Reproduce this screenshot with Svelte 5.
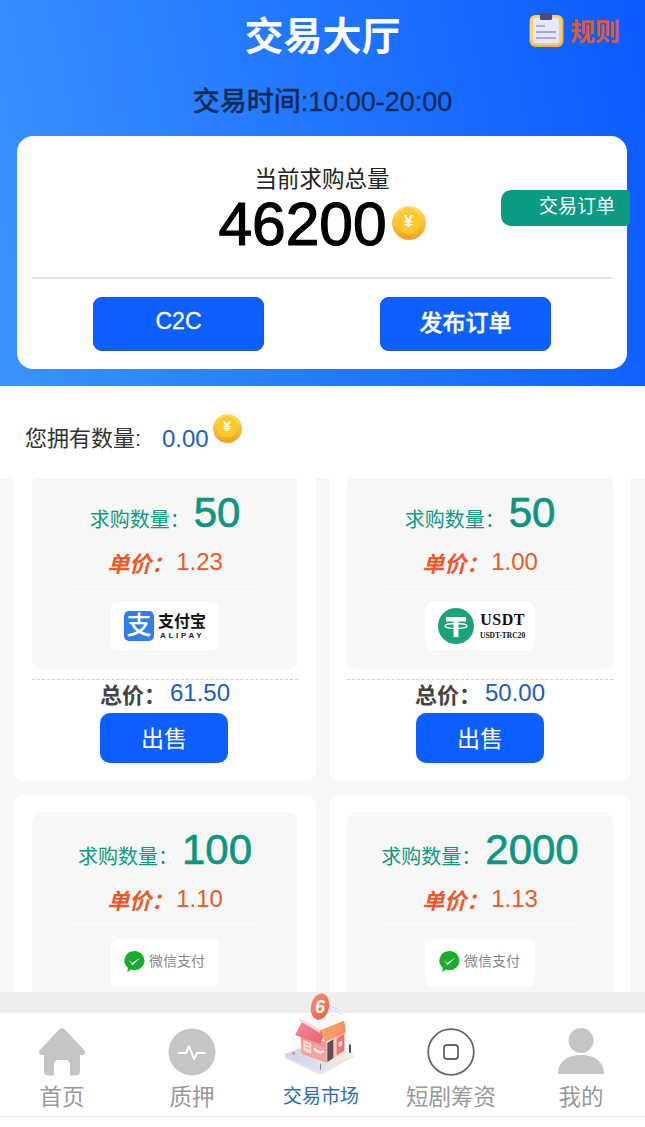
<script>
  const cards = [
    { qty: '50', price: '1.23', total: '61.50', pay: 'alipay' },
    { qty: '50', price: '1.00', total: '50.00', pay: 'usdt' },
    { qty: '100', price: '1.10', total: '110.00', pay: 'wechat' },
    { qty: '2000', price: '1.13', total: '2260.00', pay: 'wechat' }
  ];
</script>

{#snippet coin(cls)}
  <svg class={cls} viewBox="0 0 34 34" aria-hidden="true">
    <defs>
      <linearGradient id="rim" x1="0" y1="0" x2="0" y2="1">
        <stop offset="0" stop-color="#fde06a" />
        <stop offset="1" stop-color="#eea21c" />
      </linearGradient>
    </defs>
    <circle cx="17" cy="17" r="17" fill="url(#rim)" />
    <circle cx="16.500" cy="15" r="12.500" fill="#fbc92c" />
    <text x="16.500" y="20.500" text-anchor="middle" class="yen">¥</text>
  </svg>
{/snippet}

<div class="page">
  <header class="hero">
    <div class="top">
      <span></span>
      <h1>交易大厅</h1>
      <div class="rules">
        <svg class="clip" viewBox="0 0 35 34" aria-hidden="true">
          <rect x="0.500" y="2" width="34" height="32" rx="6" fill="#f2b04d" />
          <rect x="1" y="2" width="32" height="30" rx="6" fill="#f9d06c" />
          <rect x="4" y="5" width="26" height="25" rx="2.500" fill="#e8e7fb" />
          <rect x="11" y="0" width="12" height="7" rx="1.500" fill="#4b4a80" />
          <rect x="7" y="12" width="9" height="2" fill="#aab0e4" />
          <rect x="7" y="18" width="20" height="2" fill="#a3aae2" />
          <rect x="7" y="24" width="20" height="2" fill="#a3aae2" />
        </svg>
        <span>规则</span>
      </div>
    </div>
    <p class="hours">交易时间:10:00-20:00</p>

    <section class="panel">
      <p class="panel-title">当前求购总量</p>
      <div class="sum">
        <span>46200</span>
        {@render coin('coin-lg')}
      </div>
      <div class="tag">交易订单</div>
      <div class="rule"></div>
      <div class="actions">
        <button class="light">C2C</button>
        <button>发布订单</button>
      </div>
    </section>
  </header>

  <div class="balance">
    <span class="bal-label">您拥有数量:</span>
    <span class="bal-value">0.00</span>
    {@render coin('coin-sm')}
  </div>

  <div class="list">
    <div class="grid">
      {#each cards as c}
        <article class="card">
          <div class="inner">
            <div class="qty"><span class="qty-l">求购数量{'\uFF1A'}</span><b>{c.qty}</b></div>
            <div class="price"><em>单价{'\uFF1A'}</em><span>{c.price}</span></div>
            <div class="thin"></div>
            <div class="logo {c.pay}">
              {#if c.pay === 'alipay'}
                <div class="ali-mark">支</div>
                <div class="ali-text"><strong>支付宝</strong><small>ALIPAY</small></div>
              {:else if c.pay === 'usdt'}
                <svg class="tether" viewBox="0 0 36 36" aria-hidden="true">
                  <circle cx="18" cy="18" r="18" fill="#1ba27a" />
                  <path d="M8 9h20v4.500h-7.600v4.200h-4.800v-4.200H8z M15.600 17.700h4.800V29h-4.800z" fill="#fff" />
                  <ellipse cx="18" cy="18" rx="11" ry="2.500" fill="none" stroke="#fff" stroke-width="1.300" />
                </svg>
                <div class="usdt-text"><strong>USDT</strong><small>USDT-TRC20</small></div>
              {:else}
                <svg class="wx" viewBox="0 0 22 23" aria-hidden="true">
                  <path d="M11 0a10.500 10 0 1 1-4 19.300L3.500 22.500 4 17.500A10.500 10 0 0 1 11 0z" fill="#1aad2c" />
                  <path d="M5 9.500l3.500 3 8.500-5.500-8 8z" fill="#fff" />
                </svg>
                <span class="wx-text">微信支付</span>
              {/if}
            </div>
          </div>
          <div class="dash"></div>
          <div class="total"><strong>总价{'\uFF1A'}</strong><span>{c.total}</span></div>
          <button class="sell">出售</button>
        </article>
      {/each}
    </div>
  </div>

  <div class="band"></div>

  <nav class="nav">
    <div class="item">
      <svg class="ico" viewBox="0 0 48 48" aria-hidden="true">
        <path d="M24 0c1 0 2 .5 3 1.500L46 22c2 2.500 1 5-2 5h-2v16c0 3-1.500 4.500-4 4.500h-6V37c0-3-2-5-4-5h-8c-2 0-4 2-4 5v10.500h-6c-2.500 0-4-1.500-4-4.500V27H4c-3 0-4-2.500-2-5L21 1.500C22 .5 23 0 24 0z" fill="#c5c5c5" />
      </svg>
      <span>首页</span>
    </div>
    <div class="item">
      <svg class="ico" viewBox="0 0 48 48" aria-hidden="true">
        <circle cx="24" cy="24" r="23.500" fill="#c5c5c5" />
        <path d="M11 25h7l3-7 5 13 3-6h8" fill="none" stroke="#fff" stroke-width="2" stroke-linejoin="round" stroke-linecap="round" />
      </svg>
      <span>质押</span>
    </div>
    <div class="item active">
      <svg class="shop" viewBox="0 0 330 270" aria-hidden="true">
        <defs>
          <linearGradient id="base" x1="0" y1="0" x2="1" y2="0">
            <stop offset="0" stop-color="#c9d2f1" />
            <stop offset="1" stop-color="#fdeedd" />
          </linearGradient>
          <linearGradient id="wall" x1="0" y1="0" x2="0" y2="1">
            <stop offset="0" stop-color="#f58d8d" />
            <stop offset="1" stop-color="#f3a79a" />
          </linearGradient>
          <linearGradient id="awn" x1="0" y1="0" x2="1" y2="1">
            <stop offset="0" stop-color="#f58a98" />
            <stop offset="1" stop-color="#ea5f6a" />
          </linearGradient>
          <linearGradient id="awn2" x1="0" y1="0" x2="1" y2="0">
            <stop offset="0" stop-color="#f6a468" />
            <stop offset="1" stop-color="#f58f62" />
          </linearGradient>
          <linearGradient id="sign" x1="0" y1="0" x2="1" y2="1">
            <stop offset="0" stop-color="#f49272" />
            <stop offset="1" stop-color="#ec5e43" />
          </linearGradient>
        </defs>
        <path d="M45 212 150 172l105 42-100 54c-3 1-7 1-10 0L48 222c-3-2-4-7-3-10z" fill="#e9e3f2" />
        <path d="M45 207 150 167l105 42-100 50c-3 1-7 1-10 0L48 216c-3-2-4-7-3-9z" fill="url(#base)" />
        <path d="M92 150 170 172v62L95 206z" fill="url(#wall)" />
        <path d="M170 172 226 142v54l-56 38z" fill="#f9c9b6" />
        <path d="M172 174 190 163v56l-18 12z" fill="#5d4f55" />
        <path d="M200 160l22-13v50l-22 14z" fill="#f27470" />
        <path d="M206 172l10-5v14l-10 6z" fill="#fde8e0" />
        <path d="M100 165l24 9v34l-24-10z" fill="#fcd9cf" />
        <path d="M104 176l16 6M104 186l16 6" stroke="#f29a96" stroke-width="2.500" />
        <path d="M130 176l34 11v36l-34-12z" fill="#f7a5a0" />
        <path d="M132 190q14 18 30 8" fill="none" stroke="#fff" stroke-width="6" />
        <path d="M75 150 95 112l75 24-20 40z" fill="url(#awn)" />
        <path d="M150 134 222 104l6 38-62 30z" fill="url(#awn2)" />
        <path d="M88 98 150 74l76 32-76 30z" fill="#fff8f3" />
        <path d="M88 98l62 38v8L89 108z" fill="#efdcd8" />
        <path d="M172 50l46 22v18l-46-22z" fill="#f3f1fb" />
        <path d="M176 60l38 18M176 68l38 18" stroke="#c9c9ee" stroke-width="2" />
        <ellipse cx="150" cy="65" rx="27" ry="40" transform="rotate(12 150 65)" fill="url(#sign)" />
        <text x="150" y="84" text-anchor="middle" class="six">6</text>
        <rect x="237" y="178" width="6" height="26" rx="3" fill="#46505f" />
        <rect x="150" y="236" width="3" height="18" fill="#7d84a5" />
        <circle cx="71" cy="205" r="5" fill="#ec8a86" />
      </svg>
      <span>交易市场</span>
    </div>
    <div class="item">
      <svg class="ico" viewBox="0 0 48 48" aria-hidden="true">
        <circle cx="24" cy="24" r="22.800" fill="none" stroke="#666" stroke-width="1.800" />
        <rect x="17" y="17" width="14" height="14" rx="3" fill="none" stroke="#666" stroke-width="1.800" />
      </svg>
      <span>短剧筹资</span>
    </div>
    <div class="item">
      <svg class="ico" viewBox="0 0 48 48" aria-hidden="true">
        <ellipse cx="24" cy="12.500" rx="12.500" ry="12.500" fill="#c5c5c5" />
        <path d="M1 46c0-13 10-19 23-19s23 6 23 19z" fill="#c5c5c5" />
      </svg>
      <span>我的</span>
    </div>
  </nav>
</div>

<style>
  :global(body) {
    margin: 0;
    background: #fff;
  }
  .page {
    width: 645px;
    height: 1127px;
    overflow: hidden;
    background: #fff;
    font-family: "Liberation Sans", "Noto Sans CJK SC", sans-serif;
  }
  p, h1 {
    margin: 0;
  }
  button {
    border: 0;
    padding: 0;
    font: inherit;
    color: #fff;
    background: #0d5fff;
  }

  .hero {
    background: linear-gradient(78deg, #3a94ff 0%, #2178ff 50%, #0b5aff 100%);
    padding-bottom: 17px;
  }
  .top {
    display: grid;
    grid-template-columns: 1fr auto 1fr;
    align-items: center;
    height: 74px;
  }
  h1 {
    color: #fff;
    font-size: 39px;
    font-weight: 700;
    line-height: 74px;
  }
  .rules {
    justify-self: end;
    display: flex;
    align-items: center;
    gap: 6px;
    margin-right: 25px;
    margin-bottom: 15px;
    color: #df5a33;
    font-size: 25px;
    font-weight: 700;
  }
  .clip {
    width: 35px;
    height: 34px;
  }
  .hours {
    margin-top: 10px;
    line-height: 36px;
    text-align: center;
    font-size: 27px;
    font-weight: 500;
    color: #0f2b58;
    -webkit-text-stroke: 0.3px #0f2b58;
  }
  .panel {
    position: relative;
    margin: 16px 18px 0 17px;
    padding: 26px 15px 18px;
    background: #fff;
    border-radius: 16px;
  }
  .panel-title {
    text-align: center;
    font-size: 22.500px;
    line-height: 36px;
    margin-bottom: -2px;
    color: #222;
  }
  .sum {
    display: flex;
    justify-content: center;
    align-items: center;
    gap: 5px;
    height: 56px;
    color: #000;
    font-size: 60.500px;
    -webkit-text-stroke: 1.200px #000;
  }
  .coin-lg {
    width: 34px;
    height: 34px;
    margin-top: -2px;
  }
  .coin-sm {
    width: 29px;
    height: 29px;
    margin-left: 4px;
  }
  .yen {
    fill: #fff;
    font-size: 17px;
    font-weight: 700;
  }
  .tag {
    position: absolute;
    left: 484px;
    top: 54px;
    width: 129px;
    height: 36px;
    box-sizing: border-box;
    padding-right: 15px;
    line-height: 33px;
    text-align: right;
    font-size: 19px;
    color: #fff;
    background: #0b9a82;
    border-radius: 10px 5px 5px 10px;
  }
  .rule {
    height: 2px;
    margin-top: 25px;
    background: #e3e3e3;
  }
  .actions {
    display: flex;
    justify-content: center;
    gap: 116px;
    margin-top: 18px;
  }
  .actions button {
    width: 171px;
    height: 54px;
    padding-bottom: 6px;
    border-radius: 9px;
    font-size: 23px;
    font-weight: 500;
    -webkit-text-stroke: 0.4px #fff;
    box-shadow: inset 0 0 0 1px #1a5ad6;
  }
  .actions .light {
    font-weight: 400;
    -webkit-text-stroke: 0.3px #fff;
  }

  .balance {
    box-sizing: border-box;
    height: 92px;
    padding: 28px 0 0 25px;
    display: flex;
    align-items: flex-start;
  }
  .bal-label {
    width: 137px;
    font-size: 22px;
    line-height: 50px;
    color: #333;
  }
  .bal-value {
    font-size: 24px;
    line-height: 50px;
    color: #1a5fc8;
  }

  .list {
    height: 514px;
    overflow: hidden;
    background: #f7f7f7;
  }
  .grid {
    display: grid;
    grid-template-columns: 303px 302px;
    gap: 14px 13px;
    margin: -20px 0 0 13px;
  }
  .card {
    display: flex;
    flex-direction: column;
    align-items: center;
    box-sizing: border-box;
    height: 323px;
    padding: 17px 18px 18px 19px;
    background: #fff;
    border-radius: 10px;
  }
  .card:nth-child(even) {
    padding-left: 18px;
  }
  .card:nth-child(odd) .sell {
    margin-left: -2px;
  }
  .inner {
    box-sizing: border-box;
    width: 266px;
    height: 194px;
    flex: none;
    padding-top: 13px;
    display: flex;
    flex-direction: column;
    align-items: center;
    background: #f7f7f7;
    border-radius: 10px;
  }
  .qty {
    height: 50px;
    display: flex;
    align-items: center;
    justify-content: center;
    color: #0f9a84;
  }
  .qty-l {
    font-size: 20px;
    padding-top: 11px;
    padding-right: 4px;
  }
  .qty b {
    font-size: 42px;
    font-weight: 400;
    color: #0b9682;
    -webkit-text-stroke: 0.7px #0b9682;
  }
  .price {
    height: 48px;
    display: flex;
    align-items: center;
    justify-content: center;
    color: #ea5a2a;
  }
  .price em {
    font-size: 22px;
    font-weight: 700;
    font-style: italic;
    margin-right: 3px;
  }
  .price span {
    font-size: 24px;
  }
  .thin {
    width: 193px;
    height: 1px;
    flex: none;
    background: #fdfdfd;
  }
  .logo {
    box-sizing: border-box;
    width: 108px;
    height: 48px;
    flex: none;
    margin-top: 15px;
    display: flex;
    align-items: center;
    padding-left: 13px;
    background: #fff;
    border-radius: 6px;
  }
  .logo.usdt {
    padding-left: 12px;
  }
  .logo.wechat {
    padding-bottom: 3px;
  }
  .ali-mark {
    width: 30px;
    height: 30px;
    flex: none;
    background: #2f80ed;
    border-radius: 5px;
    color: #fff;
    font-size: 25px;
    line-height: 29px;
    text-align: center;
    font-weight: 500;
  }
  .ali-text {
    margin-left: 4px;
    display: flex;
    flex-direction: column;
    color: #111;
  }
  .ali-text strong {
    font-size: 16px;
    line-height: 19px;
  }
  .ali-text small {
    font-size: 8px;
    line-height: 9px;
    margin-left: 2px;
    letter-spacing: 2.700px;
    color: #222;
    font-weight: 700;
  }
  .tether {
    width: 36px;
    height: 36px;
    flex: none;
  }
  .usdt-text {
    margin-left: 6px;
    display: flex;
    flex-direction: column;
    font-family: "Liberation Serif", serif;
    color: #111;
    text-align: center;
  }
  .usdt-text strong {
    font-size: 16px;
    line-height: 20px;
    letter-spacing: 0.500px;
  }
  .usdt-text small {
    font-size: 7.500px;
    font-weight: 700;
    line-height: 12px;
  }
  .wx {
    width: 21px;
    height: 22px;
    flex: none;
  }
  .wx-text {
    margin: 0 0 3px 4px;
    font-size: 14px;
    color: #888;
    white-space: nowrap;
  }
  .dash {
    width: 266px;
    flex: none;
    margin-top: 10px;
    border-top: 1px dashed #cfcfcf;
  }
  .total {
    height: 26px;
    margin-bottom: 7px;
    display: flex;
    align-items: center;
    justify-content: center;
  }
  .total strong {
    font-size: 22px;
    font-weight: 700;
    color: #444;
    margin-right: 4px;
  }
  .total span {
    font-size: 24px;
    color: #1a5cc8;
  }
  .sell {
    width: 128px;
    height: 50px;
    flex: none;
    padding-bottom: 3px;
    border-radius: 10px;
    font-size: 23px;
  }

  .band {
    height: 21px;
    background: #eee;
  }
  .nav {
    height: 103px;
    border-bottom: 1px solid #e9e9e9;
    display: grid;
    grid-template-columns: 124px 136px 120px 142px 118px;
  }
  .item {
    position: relative;
    display: flex;
    flex-direction: column;
    align-items: center;
    padding-top: 15px;
    color: #999;
  }
  .item > span {
    margin-top: 56px;
    font-size: 22.500px;
    line-height: 28px;
    white-space: nowrap;
  }
  .ico {
    position: absolute;
    top: 15px;
    width: 48px;
    height: 48px;
  }
  .item.active > span {
    margin-top: 55px;
    margin-left: 2px;
    font-size: 19px;
    color: #2a6cb0;
  }
  .shop {
    position: absolute;
    left: 10px;
    top: -28px;
    width: 110px;
    height: 90px;
  }
  .six {
    fill: #fff;
    font-size: 54px;
    font-weight: 700;
    font-style: italic;
  }
</style>
